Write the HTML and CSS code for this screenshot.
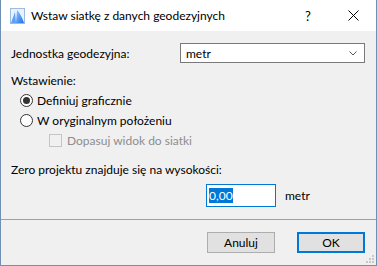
FILE: index.html
```html
<!DOCTYPE html>
<html lang="pl">
<head>
    <meta charset="UTF-8">
    <title>Wstaw siatkę z danych geodezyjnych</title>
    <link rel="stylesheet" href="styles.css">
</head>
<body>
    <div class="window">
        <div class="titlebar">
            <svg class="app-icon" viewBox="0 0 15 16" xmlns="http://www.w3.org/2000/svg">
                <defs>
                    <linearGradient id="g1" x1="0" y1="0" x2="1" y2="1">
                        <stop offset="0" stop-color="#8fc4ff"/>
                        <stop offset="1" stop-color="#1f6ee8"/>
                    </linearGradient>
                </defs>
                <rect x="0.5" y="0.5" width="14" height="15" fill="#e8f1fc" stroke="#9bbbe0"/>
                <path d="M1 15 L5 4 L6 15 Z" fill="#5aa0f5"/>
                <path d="M6 15 L7 2 Q11 6 14 15 Z" fill="url(#g1)"/>
            </svg>
            <span class="title">Wstaw siatkę z danych geodezyjnych</span>
            <span class="tb-help">?</span>
            <svg class="tb-close" viewBox="0 0 11 11" xmlns="http://www.w3.org/2000/svg">
                <path d="M0.5 0.5 L10.5 10.5 M10.5 0.5 L0.5 10.5" stroke="#000" stroke-width="1"/>
            </svg>
        </div>

        <div class="content">
            <div class="row unit-row">
                <span class="label">Jednostka geodezyjna:</span>
                <div class="select">
                    <span>metr</span>
                    <svg class="chevron" viewBox="0 0 8 5" xmlns="http://www.w3.org/2000/svg">
                        <path d="M0.5 0.5 L4 4 L7.5 0.5" fill="none" stroke="#555" stroke-width="1"/>
                    </svg>
                </div>
            </div>

            <div class="row">Wstawienie:</div>
            <div class="row option">
                <span class="radio checked"></span>Definiuj graficznie
            </div>
            <div class="row option">
                <span class="radio"></span>W oryginalnym położeniu
            </div>
            <div class="row option sub disabled">
                <span class="checkbox"></span>Dopasuj widok do siatki
            </div>

            <div class="row zero-row">Zero projektu znajduje się na wysokości:</div>
            <div class="height-row">
                <div class="input"><span class="selected">0,00</span></div>
                <span class="unit">metr</span>
            </div>
        </div>

        <div class="footer">
            <button class="btn">Anuluj</button>
            <button class="btn default">OK</button>
            <svg class="grip" viewBox="0 0 8 8" xmlns="http://www.w3.org/2000/svg">
                <rect x="6" y="0" width="2" height="2" fill="#c8c8c8"/>
                <rect x="3" y="3" width="2" height="2" fill="#c8c8c8"/>
                <rect x="6" y="3" width="2" height="2" fill="#c8c8c8"/>
                <rect x="0" y="6" width="2" height="2" fill="#c8c8c8"/>
                <rect x="3" y="6" width="2" height="2" fill="#c8c8c8"/>
                <rect x="6" y="6" width="2" height="2" fill="#c8c8c8"/>
            </svg>
        </div>
    </div>
</body>
</html>
```

FILE: styles.css
```css
* {
    margin: 0;
    padding: 0;
    box-sizing: border-box;
}

body {
    font-family: Lato, "Noto Sans", sans-serif;
    font-size: 12px;
    color: #000;
    background: #f0f0f0;
}

.window {
    width: 377px;
    height: 266px;
    display: flex;
    flex-direction: column;
    background: #f0f0f0;
    border: 1px solid #6f8fb4;
    border-top: none;
}

.titlebar {
    height: 31px;
    background: #fff;
    display: flex;
    align-items: center;
    padding-left: 9px;
}

.app-icon {
    width: 15px;
    height: 16px;
    margin-right: 6px;
}

.title {
    flex: 1;
    font-size: 12px;
}

.tb-help {
    width: 14px;
    margin-right: 29px;
    font-size: 13px;
}

.tb-close {
    width: 11px;
    height: 11px;
    margin-right: 17px;
}

.content {
    padding: 12px 10px 0 10px;
    flex: 1;
}

.row {
    height: 20px;
    display: flex;
    align-items: center;
}

.unit-row {
    margin-bottom: 7px;
}

.label {
    width: 169px;
}

.select {
    width: 185px;
    height: 20px;
    background: #fff;
    border: 1px solid #7a7a7a;
    display: flex;
    align-items: center;
    padding-left: 5px;
}

.select span {
    flex: 1;
}

.chevron {
    width: 8px;
    height: 5px;
    margin-right: 7px;
}

.option {
    padding-left: 9px;
}

.option.sub {
    padding-left: 38px;
}

.disabled {
    color: #8d8d8d;
}

.radio {
    width: 13px;
    height: 13px;
    border: 1px solid #333;
    border-radius: 50%;
    background: #fff;
    margin-right: 4px;
    display: flex;
    align-items: center;
    justify-content: center;
}

.radio.checked::after {
    content: "";
    width: 7px;
    height: 7px;
    border-radius: 50%;
    background: #333;
}

.checkbox {
    width: 13px;
    height: 13px;
    border: 1px solid #c5c5c5;
    background: #f0f0f0;
    margin-right: 5px;
}

.zero-row {
    margin-top: 9px;
}

.height-row {
    margin-top: 5px;
    height: 23px;
    display: flex;
    align-items: center;
    padding-left: 195px;
}

.input {
    width: 70px;
    height: 23px;
    background: #fff;
    border: 1px solid #0078d7;
    display: flex;
    align-items: center;
    padding-left: 2px;
}

.selected {
    background: #0078d7;
    color: #fff;
    line-height: 15px;
}

.unit {
    margin-left: 9px;
}

.footer {
    position: relative;
    height: 46px;
    border-top: 1px solid #a0a0a0;
    display: flex;
    justify-content: flex-end;
    gap: 22px;
    padding: 12px 11px 0 0;
}

.btn {
    width: 68px;
    height: 21px;
    font-family: inherit;
    font-size: 12px;
    background: #e1e1e1;
    border: 1px solid #adadad;
    color: #000;
}

.btn.default {
    border: 2px solid #0078d7;
}

.grip {
    position: absolute;
    right: 2px;
    bottom: 2px;
    width: 8px;
    height: 8px;
}
```
